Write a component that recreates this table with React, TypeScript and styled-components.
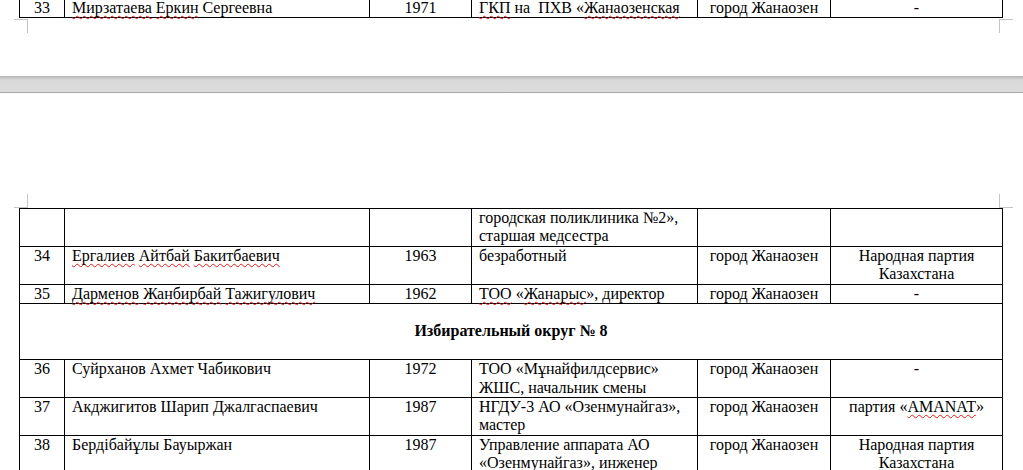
import React from 'react';
import styled, { createGlobalStyle } from 'styled-components';

const Global = createGlobalStyle`
  html, body { margin: 0; padding: 0; background: #ffffff; }
  body {
    width: 1023px;
    height: 470px;
    overflow: hidden;
    font-family: "Liberation Serif", "Times New Roman", serif;
    color: #000;
  }
`;

const Viewport = styled.div`
  display: flex;
  flex-direction: column;
  height: 470px;
  overflow: hidden;
`;

const Page = styled.section<{ $height?: number; $padTop?: number }>`
  position: relative;
  background: #fff;
  flex: ${p => (p.$height ? `0 0 ${p.$height}px` : '1 1 auto')};
  overflow: hidden;
  padding: ${p => p.$padTop ?? 0}px 0 0 19px;
  box-sizing: border-box;
`;

const PageGap = styled.div`
  flex: 0 0 17px;
  box-sizing: border-box;
  background: linear-gradient(#b3b3b3 0px, #c9c9c9 2px, #d9d9d9 4px, #dcdcdc 100%);
  border-bottom: 1px solid #a9a9a9;
`;

const CropMark = styled.span<{ $x: number; $y: number; $up?: boolean; $right?: boolean }>`
  position: absolute;
  left: ${p => p.$x}px;
  top: ${p => p.$y}px;
  width: 14px;
  height: 14px;
  pointer-events: none;
  &::before {
    content: '';
    position: absolute;
    ${p => (p.$right ? 'left: 0;' : 'right: 0;')}
    ${p => (p.$up ? 'bottom: 0;' : 'top: 0;')}
    width: 1px;
    height: 14px;
    background: #c4c4c4;
  }
  &::after {
    content: '';
    position: absolute;
    ${p => (p.$right ? 'left: 0;' : 'right: 0;')}
    ${p => (p.$up ? 'bottom: 0;' : 'top: 0;')}
    width: 14px;
    height: 1px;
    background: #c4c4c4;
  }
`;

const Table = styled.table<{ $shift?: number }>`
  border-collapse: collapse;
  table-layout: fixed;
  width: 983px;
  margin-top: ${p => p.$shift ?? 0}px;
  font-family: "Liberation Serif", "Times New Roman", serif;
  font-size: 16px;
  line-height: 18.4px;
  color: #000;
`;

const Cell = styled.td<{ $align?: 'left' | 'center' }>`
  border: 1px solid #000;
  padding: 0 7px;
  vertical-align: top;
  text-align: ${p => p.$align ?? 'left'};
  white-space: pre-wrap;
`;

const SectionCell = styled.td`
  border: 1px solid #000;
  padding: 18.4px 7px;
  text-align: center;
  font-weight: bold;
`;

const Spell = styled.span`
  text-decoration-line: underline;
  text-decoration-style: wavy;
  text-decoration-color: #e21b1b;
  text-decoration-thickness: 1px;
  text-underline-offset: 2px;
  text-decoration-skip-ink: none;
`;

const widths = [45, 305, 102, 226, 133, 172];

const Cols = () => (
  <colgroup>
    {widths.map((w, i) => (
      <col key={i} style={{ width: w }} />
    ))}
  </colgroup>
);

type RowProps = {
  n?: React.ReactNode;
  name?: React.ReactNode;
  year?: React.ReactNode;
  work?: React.ReactNode;
  place?: React.ReactNode;
  party?: React.ReactNode;
};

const Row = ({ n, name, year, work, place, party }: RowProps) => (
  <tr>
    <Cell $align="center">{n}</Cell>
    <Cell>{name}</Cell>
    <Cell $align="center">{year}</Cell>
    <Cell>{work}</Cell>
    <Cell $align="center">{place}</Cell>
    <Cell $align="center">{party}</Cell>
  </tr>
);

const City = 'город Жанаозен';

export default function App() {
  return (
    <Viewport>
      <Global />
      <Page $height={76}>
        <Table $shift={-2}>
          <Cols />
          <tbody>
            <Row
              n="33"
              name={<><Spell>Мирзатаева</Spell> <Spell>Еркин</Spell> Сергеевна</>}
              year="1971"
              work={<><Spell>ГКП</Spell> на  ПХВ «<Spell>Жанаозенская</Spell></>}
              place={City}
              party="-"
            />
          </tbody>
        </Table>
        <CropMark $x={14} $y={19} />
        <CropMark $x={999} $y={19} $right />
      </Page>
      <PageGap />
      <Page $padTop={115}>
        <CropMark $x={14} $y={101} $up />
        <CropMark $x={999} $y={101} $up $right />
        <Table>
          <Cols />
          <tbody>
            <Row work={<>городская поликлиника №2»,{'\n'}старшая медсестра</>} />
            <Row
              n="34"
              name={<><Spell>Ергалиев</Spell> <Spell>Айтбай</Spell> <Spell>Бакитбаевич</Spell></>}
              year="1963"
              work="безработный"
              place={City}
              party={<>Народная партия{'\n'}Казахстана</>}
            />
            <Row
              n="35"
              name={<><Spell>Дарменов</Spell> <Spell>Жанбирбай</Spell> <Spell>Тажигулович</Spell></>}
              year="1962"
              work={<><Spell>ТОО</Spell> «<Spell>Жанарыс</Spell>», директор</>}
              place={City}
              party="-"
            />
            <tr>
              <SectionCell colSpan={6}>Избирательный округ № 8</SectionCell>
            </tr>
            <Row
              n="36"
              name="Суйрханов Ахмет Чабикович"
              year="1972"
              work={<>ТОО «Мұнайфилдсервис»{'\n'}ЖШС, начальник смены</>}
              place={City}
              party="-"
            />
            <Row
              n="37"
              name="Акджигитов Шарип Джалгаспаевич"
              year="1987"
              work={<>НГДУ-3 АО «Озенмунайгаз»,{'\n'}мастер</>}
              place={City}
              party={<>партия «<Spell>AMANAT</Spell>»</>}
            />
            <Row
              n="38"
              name="Бердібайұлы Бауыржан"
              year="1987"
              work={<>Управление аппарата АО{'\n'}«Озенмунайгаз», инженер</>}
              place={City}
              party={<>Народная партия{'\n'}Казахстана</>}
            />
          </tbody>
        </Table>
      </Page>
    </Viewport>
  );
}
